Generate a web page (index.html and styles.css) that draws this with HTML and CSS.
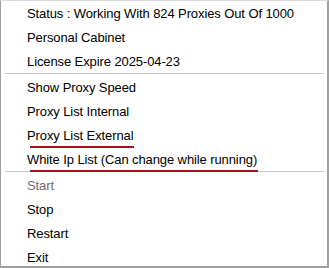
FILE: index.html
```html
<!DOCTYPE html>
<html lang="en">
<head>
    <meta charset="utf-8">
    <title>Proxy Tray Menu</title>
    <link rel="stylesheet" href="styles.css">
</head>
<body>
    <div class="tray_menu">
        <div class="menu_item">Status : Working With 824 Proxies Out Of 1000</div>
        <div class="menu_item">Personal Cabinet</div>
        <div class="menu_item">License Expire 2025-04-23</div>
        <div class="menu_separator"></div>
        <div class="menu_item">Show Proxy Speed</div>
        <div class="menu_item">Proxy List Internal</div>
        <div class="menu_item"><span class="marked">Proxy List External</span></div>
        <div class="menu_item"><span class="marked">White Ip List (Can change while running)</span></div>
        <div class="menu_separator"></div>
        <div class="menu_item disabled">Start</div>
        <div class="menu_item">Stop</div>
        <div class="menu_item">Restart</div>
        <div class="menu_item">Exit</div>
    </div>
</body>
</html>
```

FILE: styles.css
```css
/* Base */
html, body {
    margin: 0;
    padding: 0;
    background: #ffffff;
}

/* Context menu frame */
.tray_menu {
    box-sizing: border-box;
    width: 329px;
    height: 268px;
    overflow: hidden;
    background: #ffffff;
    border-top: 1px solid #dadada;
    border-left: 1px solid #a0a0a0;
    border-right: 2px solid #a0a0a0;
    border-bottom: 2px solid #a0a0a0;
    font-family: "Liberation Sans", Arial, sans-serif;
    font-size: 13px;
    letter-spacing: -0.1px;
    color: #000000;
}

.menu_item {
    height: 24px;
    line-height: 25px;
    padding-left: 26px;
    white-space: nowrap;
}

.menu_item.disabled {
    color: #6d6d6d;
}

/* red marker line under some entries */
.marked {
    position: relative;
}

.marked::after {
    content: "";
    position: absolute;
    left: 3px;
    right: -1px;
    bottom: -5px;
    height: 2px;
    background: #a01616;
}

.menu_separator {
    height: 1px;
    margin: 0 3px 1px 4px;
    background: #c8c8c8;
}
```
